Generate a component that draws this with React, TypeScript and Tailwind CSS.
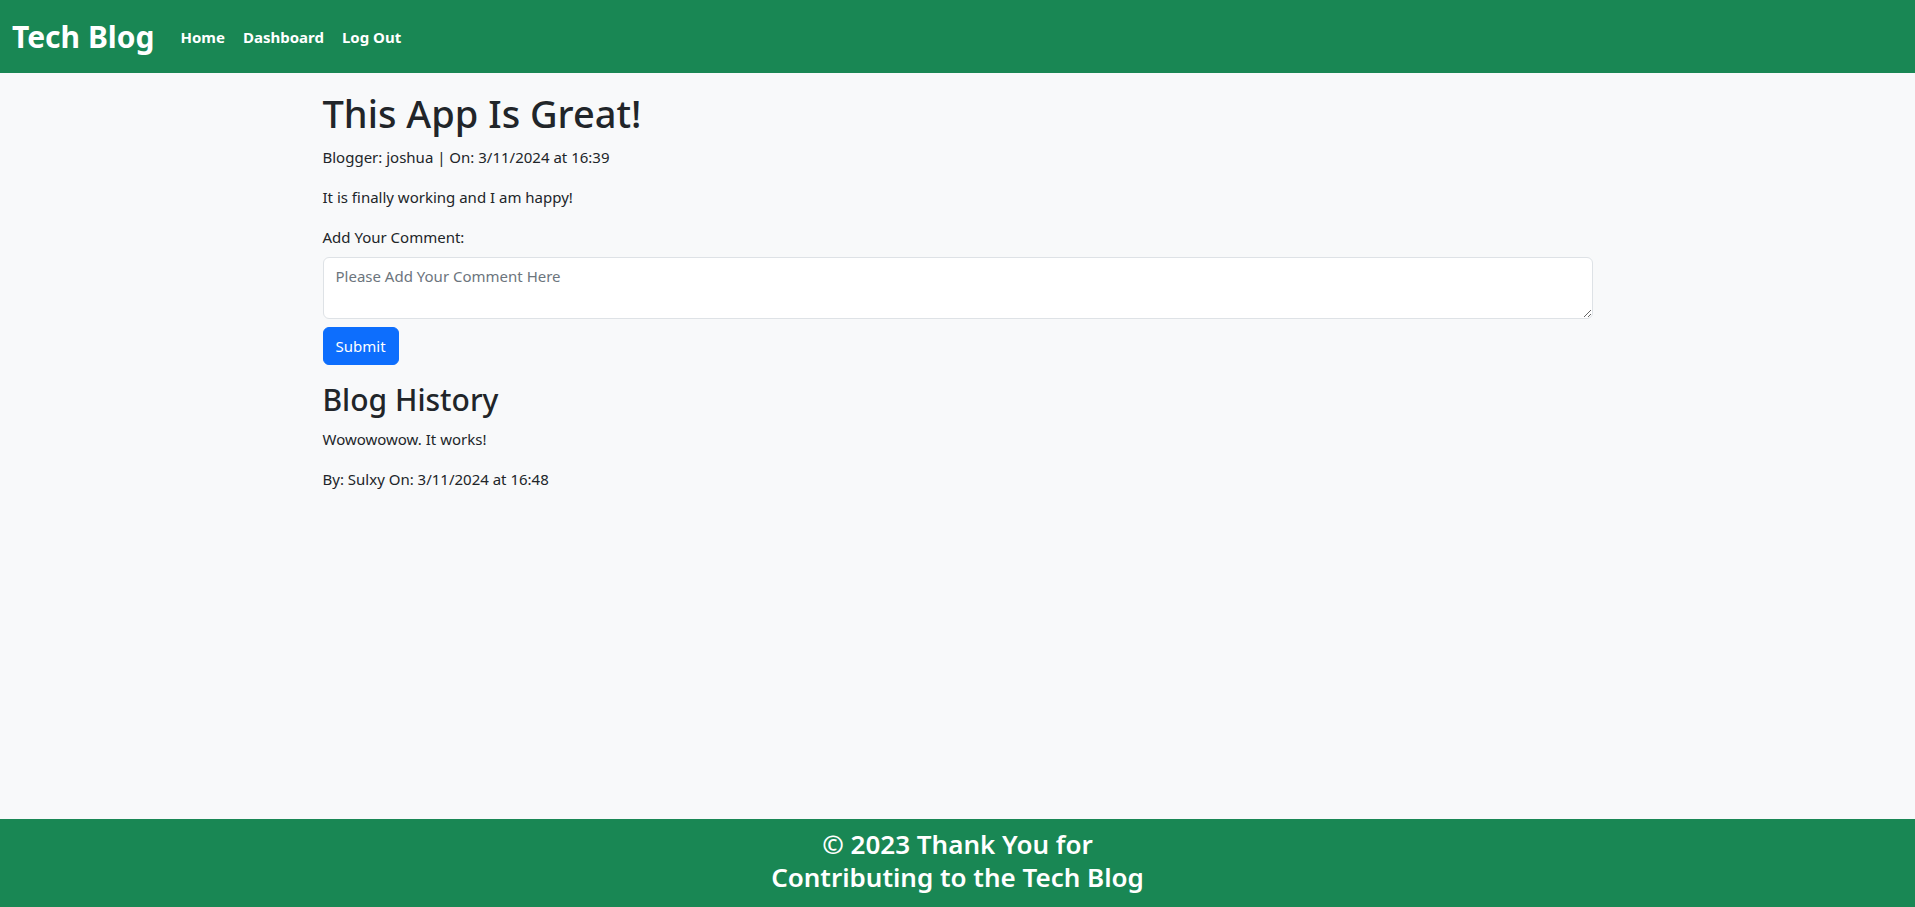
export default function App() {
  return (
    <div className="flex min-h-screen flex-col bg-[#f8f9fa] font-['Noto_Sans',sans-serif] text-[#212529]">
      <header className="flex h-[73px] items-center bg-[#198754] px-3 text-white">
        <a href="#" className="mr-[26px] text-[30px] font-bold leading-[48px]">
          Tech Blog
        </a>
        <nav className="flex items-center gap-[18px] text-[15px] font-bold leading-6">
          <a href="#">Home</a>
          <a href="#">Dashboard</a>
          <a href="#">Log Out</a>
        </nav>
      </header>

      <main className="mx-auto w-[1270px] flex-1 pt-4 text-[15px] leading-6">
        <h1 className="mb-2 text-[38px] font-medium leading-[48px]">This App Is Great!</h1>
        <p className="mb-4">Blogger: joshua | On: 3/11/2024 at 16:39</p>
        <p className="mb-4">It is finally working and I am happy!</p>

        <form className="mb-4">
          <label className="mb-2 block">Add Your Comment:</label>
          <textarea
            rows={2}
            placeholder="Please Add Your Comment Here"
            className="block w-full rounded-md border border-[#dee2e6] bg-white px-3 py-1.5 leading-6 placeholder:text-[#6c757d] focus:outline-none"
          />
          <button
            type="button"
            className="mt-2 rounded-md border border-[#0d6efd] bg-[#0d6efd] px-3 py-1.5 leading-6 text-white"
          >
            Submit
          </button>
        </form>

        <h2 className="mb-2 text-[30px] font-medium leading-[38px]">Blog History</h2>
        <p className="mb-4">Wowowowow. It works!</p>
        <p className="mb-4">By: Sulxy On: 3/11/2024 at 16:48</p>
      </main>

      <footer className="bg-[#198754] pt-[9px] pb-[13px] text-center text-[26px] font-semibold leading-[33px] text-white">
        <span className="block">© 2023 Thank You for</span>
        <span className="block">Contributing to the Tech Blog</span>
      </footer>
    </div>
  )
}
